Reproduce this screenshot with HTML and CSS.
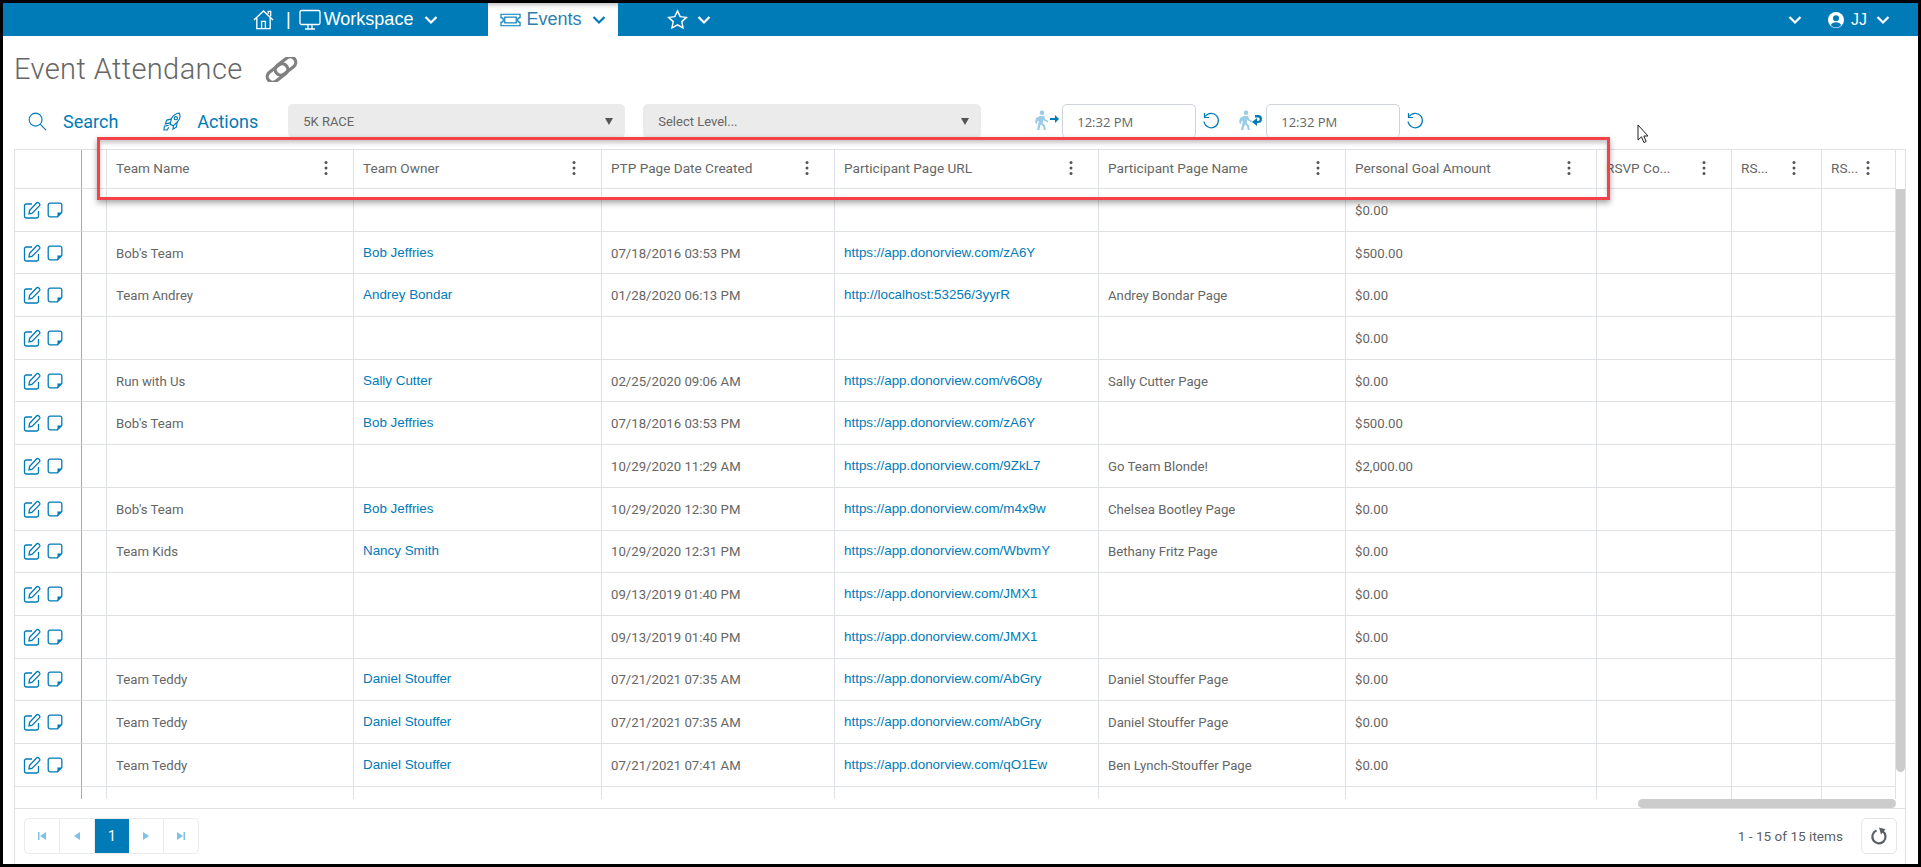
FILE: index.html
```html
<!DOCTYPE html>
<html lang="en">
<head>
<meta charset="utf-8">
<title>Event Attendance</title>
<link rel="stylesheet" href="styles.css">
</head>
<body>
<svg class="sprite" aria-hidden="true">
  <symbol id="i-chev" viewBox="0 0 14 10"><path d="M1.500 2 7 7.500 12.500 2" fill="none" stroke="currentColor" stroke-width="2.200"/></symbol>
  <symbol id="i-edit" viewBox="0 0 18 18"><path d="M9 3H3.200A1.700 1.700 0 0 0 1.500 4.700v10.600A1.700 1.700 0 0 0 3.200 17h10.600a1.700 1.700 0 0 0 1.700-1.700V10" fill="none" stroke="currentColor" stroke-width="1.300"/><path d="M6.500 9.500 13.500 2a1.600 1.600 0 0 1 2.300 0l.6.600a1.600 1.600 0 0 1 0 2.300l-7.200 7.300-3.200.7z" fill="none" stroke="currentColor" stroke-width="1.300"/></symbol>
  <symbol id="i-note" viewBox="0 0 16 16"><path d="M14.800 10.500V3A1.800 1.800 0 0 0 13 1.200H3A1.800 1.800 0 0 0 1.200 3v10A1.800 1.800 0 0 0 3 14.800h7.500z" fill="none" stroke="currentColor" stroke-width="1.300"/><path d="M14.800 10.500H10.500v4.300z" fill="currentColor"/></symbol>
  <symbol id="i-dots" viewBox="0 0 4 16"><circle cx="2" cy="2.500" r="1.500"/><circle cx="2" cy="8" r="1.500"/><circle cx="2" cy="13.500" r="1.500"/></symbol>
  <symbol id="i-undo" viewBox="0 0 18 18"><path d="M3.200 4.500A7.200 7.200 0 1 1 2 9.500" fill="none" stroke="currentColor" stroke-width="1.200"/><path d="M2.500 1v4.500H7" fill="none" stroke="currentColor" stroke-width="1.200"/></symbol>
  <symbol id="i-walk" viewBox="0 0 15 20"><circle cx="8" cy="2.800" r="2.300"/><path d="M6 6h4l1.500 3.500 3 1.500-.7 1.400-3.500-1.600-.8-1.300-.8 3.500 2.300 2.500.8 4.500h-2l-.8-3.800-2.200-2-1.500 5.800H3l2-9.500-1.500.9-.8 2.800L1 12l1-4z"/></symbol>
</svg>
<div class="frame">
  <header class="nav">
    <div class="nav-left">
      <svg class="nav-home" viewBox="0 0 22 22" fill="none" stroke="currentColor" stroke-width="1.400"><path d="M1 11.500 11 2l10 9.500M4 9v11.500h14V9M9 20.500V13h4v7.500M16 5V2.500h2.500V7.500"/></svg>
      <span class="nav-sep">|</span>
      <svg class="nav-monitor" viewBox="0 0 22 22" fill="none" stroke="currentColor" stroke-width="1.300"><rect x="1" y="1.500" width="20" height="14" rx="1.500"/><path d="M9 16v3.500M13 16v3.500M6 20h10"/></svg>
      <span class="nav-label">Workspace</span>
      <svg class="chev nav-chev-w"><use href="#i-chev"/></svg>
      <div class="nav-tab">
        <svg class="nav-ticket" viewBox="0 0 22 14" fill="none" stroke="currentColor" stroke-width="1.200"><path d="M1 1h20v3.500a2.500 2.500 0 0 0 0 5V13H1V9.500a2.500 2.500 0 0 0 0-5z"/><rect x="5" y="4" width="12" height="6"/></svg>
        <span class="tab-label">Events</span>
        <svg class="chev tab-chev"><use href="#i-chev"/></svg>
      </div>
      <svg class="nav-star" viewBox="0 0 22 22" fill="none" stroke="currentColor" stroke-width="1.500"><path d="m11 2 2.800 6 6.500.8-4.800 4.400 1.300 6.500-5.800-3.200-5.800 3.200 1.300-6.500L1.700 8.800 8.200 8z"/></svg>
      <svg class="chev star-chev"><use href="#i-chev"/></svg>
    </div>
    <div class="nav-right">
      <svg class="chev"><use href="#i-chev"/></svg>
      <svg class="nav-user" viewBox="0 0 16 16"><circle cx="8" cy="8" r="8" fill="#fff"/><circle cx="8" cy="6.200" r="3" fill="#007bb8"/><path d="M2.800 13.200C4 10.800 6 10.200 8 10.200s4 .6 5.200 3A7.500 7.500 0 0 1 8 15.500a7.500 7.500 0 0 1-5.200-2.300z" fill="#007bb8"/></svg>
      <span class="nav-jj">JJ</span>
      <svg class="chev"><use href="#i-chev"/></svg>
    </div>
  </header>

  <div class="title-row">
    <h1 class="title">Event Attendance</h1>
    <svg class="title-link" viewBox="0 0 33 25" fill="none" stroke="#808080" stroke-width="3.200"><rect x="9" y="3.500" width="23" height="11" rx="5.500" transform="rotate(-38 20.500 9)"/><rect x="1" y="10.500" width="23" height="11" rx="5.500" transform="rotate(-38 12.500 16)"/></svg>
  </div>

  <div class="toolbar">
    <svg class="tool-search" viewBox="0 0 20 20" fill="none" stroke="#007bb8" stroke-width="1.200"><circle cx="8" cy="8" r="6.800"/><path d="m13 13 6 6"/></svg>
    <span class="tool-label tool-label-search">Search</span>
    <svg class="tool-rocket" viewBox="0 0 20 20" fill="none" stroke="#007bb8" stroke-width="1.200"><path d="M17 1c-3 .3-6 2-8 5.500L7.500 13l3.500 1.500 4.500-4.500C18 7.500 18.500 4 17 1z"/><circle cx="13.500" cy="6.500" r="1.700"/><path d="M8.500 7.500 4 8.500 2.500 12.500l5-1M11 14.500l-.5 3.500 3.500-2 1-5M6 14l-4.500 1-.5 4h3.500l1.500-3"/></svg>
    <span class="tool-label">Actions</span>
    <div class="select select-race"><span>5K RACE</span><i class="caret"></i></div>
    <div class="select select-level"><span>Select Level...</span><i class="caret"></i></div>
    <svg class="walk"><use href="#i-walk" width="15" height="20"/><path d="M16 8h5v-3l4 4-4 4v-3h-5z" fill="#007bb8"/></svg>
    <div class="time">12:32 PM</div>
    <svg class="undo"><use href="#i-undo"/></svg>
    <svg class="walk walk-back"><use href="#i-walk" width="15" height="20"/><path d="M17 5h3a4 4 0 0 1 0 8h-1v3l-5-4 5-4v3h1a1.600 1.600 0 0 0 0-3.500h-3z" fill="#007bb8"/></svg>
    <div class="time">12:32 PM</div>
    <svg class="undo"><use href="#i-undo"/></svg>
  </div>

  <section class="grid">
    <div class="grid-body">
      <div class="grid-scroll">
      <table class="table">
        <colgroup>
          <col class="c-act"><col class="c-gut"><col class="c-team"><col class="c-owner"><col class="c-date"><col class="c-url"><col class="c-name"><col class="c-goal"><col class="c-rsvp"><col class="c-rs1"><col class="c-rs2">
        </colgroup>
        <thead>
          <tr>
            <th class="lock-a"></th><th class="lock-b"></th>
            <th><div class="th-in"><span>Team Name</span><svg class="dots"><use href="#i-dots"/></svg></div></th>
            <th><div class="th-in"><span>Team Owner</span><svg class="dots"><use href="#i-dots"/></svg></div></th>
            <th><div class="th-in"><span>PTP Page Date Created</span><svg class="dots"><use href="#i-dots"/></svg></div></th>
            <th><div class="th-in"><span>Participant Page URL</span><svg class="dots"><use href="#i-dots"/></svg></div></th>
            <th><div class="th-in"><span>Participant Page Name</span><svg class="dots"><use href="#i-dots"/></svg></div></th>
            <th><div class="th-in"><span>Personal Goal Amount</span><svg class="dots"><use href="#i-dots"/></svg></div></th>
            <th><div class="th-in"><span>RSVP Co...</span><svg class="dots"><use href="#i-dots"/></svg></div></th>
            <th><div class="th-in"><span>RS...</span><svg class="dots"><use href="#i-dots"/></svg></div></th>
            <th><div class="th-in"><span>RS...</span><svg class="dots"><use href="#i-dots"/></svg></div></th>
          </tr>
        </thead>
        <tbody>
          <tr><td class="lock-a"><svg class="ic-edit"><use href="#i-edit"/></svg><svg class="ic-note"><use href="#i-note"/></svg></td><td class="lock-b"></td><td></td><td></td><td></td><td></td><td></td><td>$0.00</td><td></td><td></td><td></td></tr>
          <tr><td class="lock-a"><svg class="ic-edit"><use href="#i-edit"/></svg><svg class="ic-note"><use href="#i-note"/></svg></td><td class="lock-b"></td><td>Bob's Team</td><td><a class="lnk">Bob Jeffries</a></td><td>07/18/2016 03:53 PM</td><td><a class="lnk">https://app.donorview.com/zA6Y</a></td><td></td><td>$500.00</td><td></td><td></td><td></td></tr>
          <tr><td class="lock-a"><svg class="ic-edit"><use href="#i-edit"/></svg><svg class="ic-note"><use href="#i-note"/></svg></td><td class="lock-b"></td><td>Team Andrey</td><td><a class="lnk">Andrey Bondar</a></td><td>01/28/2020 06:13 PM</td><td><a class="lnk">http://localhost:53256/3yyrR</a></td><td>Andrey Bondar Page</td><td>$0.00</td><td></td><td></td><td></td></tr>
          <tr><td class="lock-a"><svg class="ic-edit"><use href="#i-edit"/></svg><svg class="ic-note"><use href="#i-note"/></svg></td><td class="lock-b"></td><td></td><td></td><td></td><td></td><td></td><td>$0.00</td><td></td><td></td><td></td></tr>
          <tr><td class="lock-a"><svg class="ic-edit"><use href="#i-edit"/></svg><svg class="ic-note"><use href="#i-note"/></svg></td><td class="lock-b"></td><td>Run with Us</td><td><a class="lnk">Sally Cutter</a></td><td>02/25/2020 09:06 AM</td><td><a class="lnk">https://app.donorview.com/v6O8y</a></td><td>Sally Cutter Page</td><td>$0.00</td><td></td><td></td><td></td></tr>
          <tr><td class="lock-a"><svg class="ic-edit"><use href="#i-edit"/></svg><svg class="ic-note"><use href="#i-note"/></svg></td><td class="lock-b"></td><td>Bob's Team</td><td><a class="lnk">Bob Jeffries</a></td><td>07/18/2016 03:53 PM</td><td><a class="lnk">https://app.donorview.com/zA6Y</a></td><td></td><td>$500.00</td><td></td><td></td><td></td></tr>
          <tr><td class="lock-a"><svg class="ic-edit"><use href="#i-edit"/></svg><svg class="ic-note"><use href="#i-note"/></svg></td><td class="lock-b"></td><td></td><td></td><td>10/29/2020 11:29 AM</td><td><a class="lnk">https://app.donorview.com/9ZkL7</a></td><td>Go Team Blonde!</td><td>$2,000.00</td><td></td><td></td><td></td></tr>
          <tr><td class="lock-a"><svg class="ic-edit"><use href="#i-edit"/></svg><svg class="ic-note"><use href="#i-note"/></svg></td><td class="lock-b"></td><td>Bob's Team</td><td><a class="lnk">Bob Jeffries</a></td><td>10/29/2020 12:30 PM</td><td><a class="lnk">https://app.donorview.com/m4x9w</a></td><td>Chelsea Bootley Page</td><td>$0.00</td><td></td><td></td><td></td></tr>
          <tr><td class="lock-a"><svg class="ic-edit"><use href="#i-edit"/></svg><svg class="ic-note"><use href="#i-note"/></svg></td><td class="lock-b"></td><td>Team Kids</td><td><a class="lnk">Nancy Smith</a></td><td>10/29/2020 12:31 PM</td><td><a class="lnk">https://app.donorview.com/WbvmY</a></td><td>Bethany Fritz Page</td><td>$0.00</td><td></td><td></td><td></td></tr>
          <tr><td class="lock-a"><svg class="ic-edit"><use href="#i-edit"/></svg><svg class="ic-note"><use href="#i-note"/></svg></td><td class="lock-b"></td><td></td><td></td><td>09/13/2019 01:40 PM</td><td><a class="lnk">https://app.donorview.com/JMX1</a></td><td></td><td>$0.00</td><td></td><td></td><td></td></tr>
          <tr><td class="lock-a"><svg class="ic-edit"><use href="#i-edit"/></svg><svg class="ic-note"><use href="#i-note"/></svg></td><td class="lock-b"></td><td></td><td></td><td>09/13/2019 01:40 PM</td><td><a class="lnk">https://app.donorview.com/JMX1</a></td><td></td><td>$0.00</td><td></td><td></td><td></td></tr>
          <tr><td class="lock-a"><svg class="ic-edit"><use href="#i-edit"/></svg><svg class="ic-note"><use href="#i-note"/></svg></td><td class="lock-b"></td><td>Team Teddy</td><td><a class="lnk">Daniel Stouffer</a></td><td>07/21/2021 07:35 AM</td><td><a class="lnk">https://app.donorview.com/AbGry</a></td><td>Daniel Stouffer Page</td><td>$0.00</td><td></td><td></td><td></td></tr>
          <tr><td class="lock-a"><svg class="ic-edit"><use href="#i-edit"/></svg><svg class="ic-note"><use href="#i-note"/></svg></td><td class="lock-b"></td><td>Team Teddy</td><td><a class="lnk">Daniel Stouffer</a></td><td>07/21/2021 07:35 AM</td><td><a class="lnk">https://app.donorview.com/AbGry</a></td><td>Daniel Stouffer Page</td><td>$0.00</td><td></td><td></td><td></td></tr>
          <tr><td class="lock-a"><svg class="ic-edit"><use href="#i-edit"/></svg><svg class="ic-note"><use href="#i-note"/></svg></td><td class="lock-b"></td><td>Team Teddy</td><td><a class="lnk">Daniel Stouffer</a></td><td>07/21/2021 07:41 AM</td><td><a class="lnk">https://app.donorview.com/qO1Ew</a></td><td>Ben Lynch-Stouffer Page</td><td>$0.00</td><td></td><td></td><td></td></tr>
          <tr><td class="lock-a"></td><td class="lock-b"></td><td></td><td></td><td></td><td></td><td></td><td></td><td></td><td></td><td></td></tr>
        </tbody>
      </table>
      </div>
      <div class="vbar"></div>
      <div class="hbar"></div>
    </div>
    <footer class="pager">
      <div class="pages">
        <span class="pg"><svg class="pg-ic" viewBox="0 0 10 10"><path d="M1 1h1.500v8H1zM9 1v8L3 5z"/></svg></span>
        <span class="pg"><svg class="pg-ic" viewBox="0 0 10 10"><path d="M8 1v8L2 5z"/></svg></span>
        <span class="pg pg-on">1</span>
        <span class="pg"><svg class="pg-ic" viewBox="0 0 10 10"><path d="M2 1v8l6-4z"/></svg></span>
        <span class="pg"><svg class="pg-ic" viewBox="0 0 10 10"><path d="M1 1v8l6-4zM7.500 1H9v8H7.500z"/></svg></span>
      </div>
      <div class="pager-right">
        <span class="items">1 - 15 of 15 items</span>
        <span class="reload"><svg viewBox="0 0 18 18" class="reload-ic" fill="none" stroke="#5a5f66" stroke-width="2.200"><path d="M12.500 4.200A6.600 6.600 0 1 1 6.500 3.600"/><path d="M9 .5l6.500 1.800L11 7.500z" fill="#5a5f66" stroke="none"/></svg></span>
      </div>
    </footer>
  </section>

  <div class="highlight"></div>
  <svg class="cursor" viewBox="0 0 12 20"><path d="M1 1v15l3.500-3.200 2.400 5.700 2.300-1-2.400-5.500H11z" fill="#fff" stroke="#222" stroke-width="1"/></svg>
</div>
</body>
</html>
```

FILE: styles.css
```css
* { box-sizing: border-box; }
html, body { margin: 0; height: 100%; }
body { background: #000; font-family: Roboto, "Liberation Sans", sans-serif; color: #666; overflow: hidden; }
.sprite { position: absolute; width: 0; height: 0; }
.frame { position: relative; width: 1921px; height: 867px; background: #fff; border-style: solid; border-color: #000; border-width: 3px; display: flex; flex-direction: column; }

/* nav */
.nav { height: 33px; flex: none; background: #007bb8; color: #fff; display: flex; justify-content: space-between; align-items: center; }
.nav-left { display: flex; align-items: center; height: 100%; padding-left: 250px; }
.nav-right { display: flex; align-items: center; padding-right: 28px; }
.nav-home { width: 21px; height: 21px; }
.nav-sep { margin-left: 12px; font: 18px "Liberation Sans", sans-serif; }
.nav-monitor { width: 22px; height: 22px; margin-left: 8px; }
.nav-label { margin-left: 3px; font: 18px "Liberation Sans", sans-serif; }
.chev { width: 14px; height: 10px; color: #fff; display: block; }
.nav-chev-w { margin-left: 11px; }
.nav-tab { display: flex; align-items: center; height: 100%; width: 130px; margin-left: 50px; background: #fff; color: #007bb8; padding-left: 12px; box-shadow: inset 0 5px 4px -3px rgba(0,0,0,.25); }
.nav-ticket { width: 21px; height: 14px; }
.tab-label { margin-left: 5px; font: 18px "Liberation Sans", sans-serif; color: #2d7fb2; }
.tab-chev { margin-left: 11px; color: #007bb8; }
.nav-star { width: 21px; height: 21px; margin-left: 49px; }
.star-chev { margin-left: 9px; }
.nav-user { width: 16px; height: 16px; margin-left: 26px; }
.nav-jj { margin: 0 9px 0 7px; font: 16px "Liberation Sans", sans-serif; }

/* title */
.title-row { height: 68px; flex: none; display: flex; align-items: center; padding: 0 0 2px 11px; }
.title { margin: 0; font: 300 29px Roboto, sans-serif; color: #666; letter-spacing: .4px; }
.title-link { width: 33px; height: 25px; margin-left: 22px; }

/* toolbar */
.toolbar { height: 34px; flex: none; display: flex; align-items: center; padding-left: 25px; }
.tool-search { width: 19px; height: 19px; }
.tool-rocket { width: 19px; height: 19px; margin-left: 45px; }
.tool-label { color: #007bb8; font-size: 18px; margin-left: 15px; }
.tool-label-search { margin-left: 16px; }
.select { height: 34px; background: #ebebeb; border-radius: 5px; display: flex; align-items: center; justify-content: space-between; padding: 0 12px 0 15px; font-size: 13px; color: #666; }
.select-race { width: 337px; margin-left: 30px; }
.select-level { width: 338px; margin-left: 18px; }
.caret { width: 0; height: 0; border-left: 4px solid transparent; border-right: 4px solid transparent; border-top: 7px solid #555; }
.walk { width: 26px; height: 22px; margin-left: 53px; fill: #9ccde6; }
.walk-back { margin-left: 18px; }
.time { width: 134px; height: 34px; margin-left: 2px; border: 1px solid #ced4da; border-bottom: 0; border-radius: 5px; display: flex; align-items: center; padding-left: 14px; font: 13px "Open Sans", sans-serif; color: #666; }
.undo { width: 18px; height: 18px; margin-left: 6px; color: #007bb8; }

/* grid */
.grid { flex: 1; min-height: 0; margin: 11px 12px 0 11px; border-left: 1px solid #dee2e6; border-right: 1px solid #dee2e6; display: flex; flex-direction: column; }
.grid-body { position: relative; height: 660px; flex: none; border-top: 1px solid #dee2e6; border-bottom: 1px solid #dee2e6; }
.grid-scroll { height: 649px; overflow: hidden; }
.table { border-collapse: separate; border-spacing: 0; table-layout: fixed; width: 1881px; font-size: 13.200px; color: #666; }
.c-act { width: 67px; } .c-gut { width: 25px; } .c-team { width: 247px; } .c-owner { width: 248px; } .c-date { width: 233px; } .c-url { width: 264px; } .c-name { width: 247px; } .c-goal { width: 251px; } .c-rsvp { width: 135px; } .c-rs1 { width: 90px; } .c-rs2 { width: 74px; }
.table th, .table td { padding: 0 0 0 9px; border-right: 1px solid #dee2e6; border-bottom: 1px solid #dee2e6; font-weight: 400; text-align: left; white-space: nowrap; overflow: hidden; }
.table td { padding-top: 1px; height: 42.700px; }
.table th { height: 39px; padding-bottom: 2px; font-size: 13.600px; }
.table th.lock-a, .table td.lock-a { padding: 0 0 0 8px; border-right: 1px solid #aaa; }
.table th.lock-b, .table td.lock-b { padding: 0; }
.table td.lock-a { line-height: 0; }
.th-in { display: flex; justify-content: space-between; align-items: center; padding-right: 25px; }
.dots { width: 4px; height: 16px; fill: #555; flex: none; }
.ic-edit { width: 18px; height: 18px; color: #007bb8; }
.ic-note { width: 16px; height: 16px; color: #007bb8; margin: 0 0 1px 6px; }
.lnk { color: #007bb8; font: 13.400px "Liberation Sans", sans-serif; position: relative; top: -1px; }
.vbar { position: absolute; right: 0; top: 39px; width: 9px; height: 583px; background: #ccc; border-radius: 0 0 5px 5px; }
.hbar { position: absolute; left: 1623px; bottom: 0; width: 258px; height: 9px; background: #ccc; border-radius: 5px; }

/* pager */
.pager { flex: 1; display: flex; justify-content: space-between; align-items: flex-start; padding: 9px 8px 0 9px; }
.pages { display: flex; width: 175px; height: 36px; border: 1px solid #e9ecef; border-radius: 5px; overflow: hidden; }
.pg { flex: 1; display: flex; align-items: center; justify-content: center; border-right: 1px solid #e9ecef; }
.pg:last-child { border-right: 0; }
.pg-ic { width: 10px; height: 10px; fill: #7fc1e3; }
.pg-on { background: #007bb8; color: #fff; font-size: 14px; border-right: 0; }
.pager-right { display: flex; align-items: center; height: 36px; }
.items { font-size: 13.600px; color: #5a5f66; }
.reload { width: 36px; height: 36px; margin-left: 18px; border: 1px solid #e3e6ea; border-radius: 5px; display: flex; align-items: center; justify-content: center; }
.reload-ic { width: 18px; height: 18px; }

/* overlays */
.highlight { position: absolute; left: 94px; top: 134px; width: 1513px; height: 63px; border: 3px solid #f44248; box-shadow: 0 3px 6px rgba(0,0,0,.35), inset 0 3px 4px rgba(0,0,0,.22); pointer-events: none; }
.cursor { position: absolute; left: 1634px; top: 121px; width: 12px; height: 20px; }
```
